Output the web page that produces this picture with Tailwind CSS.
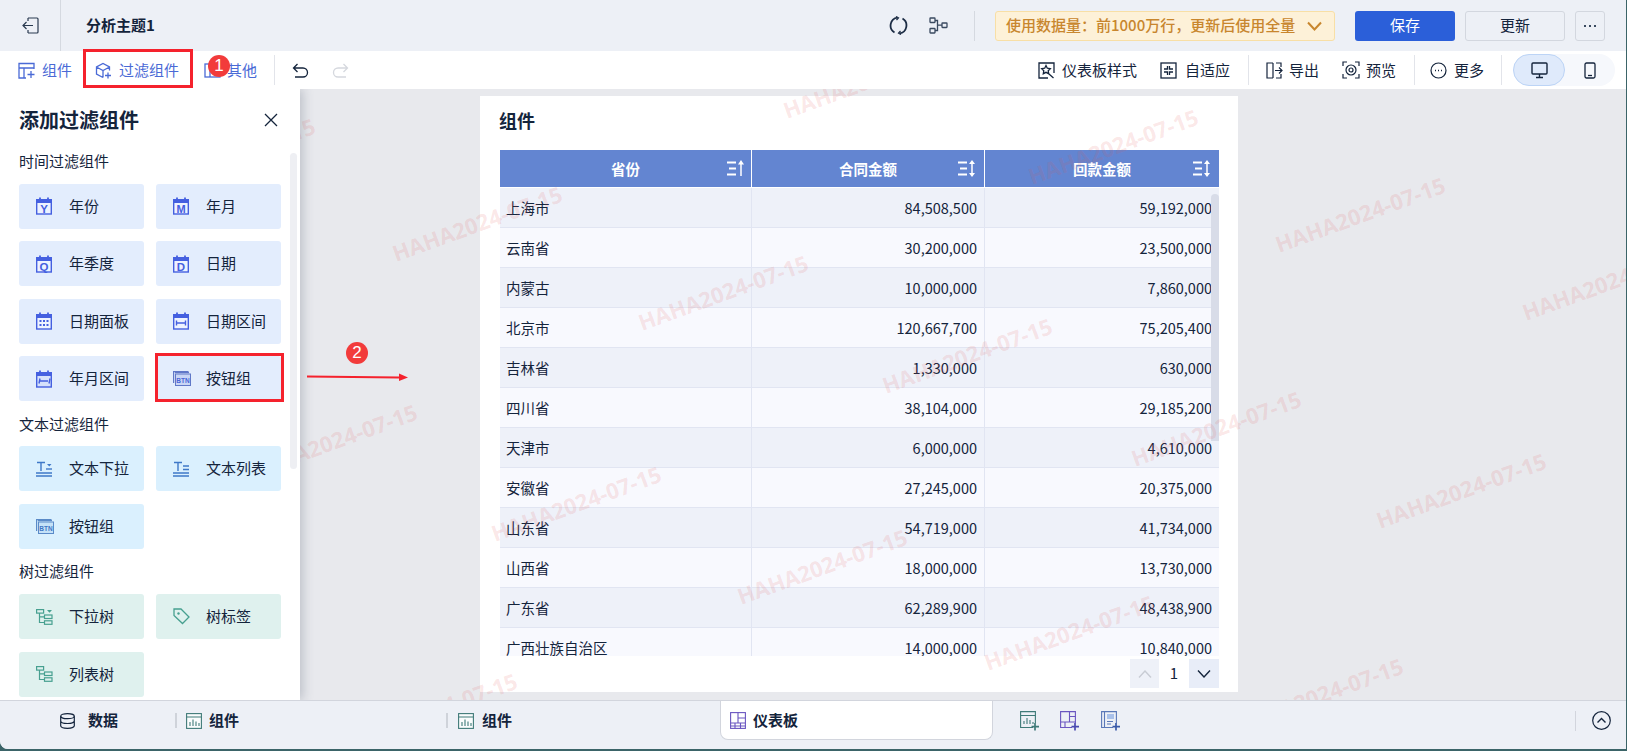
<!DOCTYPE html>
<html lang="zh">
<head>
  <meta charset="UTF-8" />
  <title>分析主题1</title>
  <script src="https://cdn.jsdelivr.net/npm/@tailwindcss/browser@4"></script>
</head>
<body class="bg-[#3b6468]">
<div class="relative w-[1627px] h-[751px] overflow-hidden bg-[#3b6468] font-['Noto_Sans_CJK_SC',sans-serif] text-[15px] text-[#14243c]">
  <div class="w-[1626px] h-[749px] flex flex-col overflow-hidden rounded-bl-lg bg-[#edf0f6]">

    <!-- top bar -->
    <header class="h-[51px] shrink-0 flex items-center pr-[21px]">
      <div class="w-[61px] h-full flex items-center justify-center border-r border-[#d5d9e0]">
        <svg class="w-[17px] h-[17px]" viewBox="0 0 17 17" fill="none" stroke="#2a3a50" stroke-width="1.2"><path d="M6 1h9a1 1 0 0 1 1 1v13a1 1 0 0 1-1 1H6M6 1v3M6 16v-3M11 8.500H1M4.500 5 1 8.500 4.500 12"/></svg>
      </div>
      <h1 class="ml-[25px] font-bold">分析主题1</h1>
      <div class="ml-auto flex items-center">
        <svg class="w-[19px] h-[19px]" viewBox="0 0 19 19" fill="none" stroke="#1c2c44" stroke-width="1.800"><path d="M8.500 1.600a8 8 0 0 0-3 14.800M10.500 17.400a8 8 0 0 0 3-14.800"/><path d="M7 .5 9.500 1.800 7.500 4M12 18.500 9.500 17.200l2-2.200" stroke-width="1.200"/></svg>
        <svg class="ml-[21px] w-[19px] h-[19px]" viewBox="0 0 19 19" fill="none" stroke="#3a4a60" stroke-width="1.300"><rect x="1" y="2" width="5" height="4.500" rx=".5"/><rect x="1" y="12.500" width="5" height="4.500" rx=".5"/><rect x="13" y="7" width="5" height="4.500" rx=".5"/><path d="M6 4.500h2.500v10H6M8.500 9.200H13"/></svg>
        <div class="ml-[26px] mr-[20px] w-px h-[30px] bg-[#d5d9e0]"></div>
        <div class="w-[340px] h-[30px] flex items-center pl-[10px] rounded-[3px] border border-[#f8dfa6] bg-[#fdf1d8] text-[#c8862e] font-medium">
          使用数据量：前1000万行，更新后使用全量
          <svg class="ml-[12px] w-[15px] h-[10px]" viewBox="0 0 15 10" fill="none" stroke="#c8862e" stroke-width="2"><path d="M1 1.500 7.500 8.500 14 1.500"/></svg>
        </div>
        <button class="ml-[20px] w-[100px] h-[30px] rounded-[3px] bg-[#2b5fd9] text-white">保存</button>
        <button class="ml-[10px] w-[100px] h-[30px] rounded-[3px] border border-[#d3d7df]">更新</button>
        <button class="ml-[10px] w-[30px] h-[30px] rounded-[3px] border border-[#d3d7df] flex items-center justify-center gap-[3px]">
          <i class="w-[2px] h-[2px] bg-[#3a4a60]"></i><i class="w-[2px] h-[2px] bg-[#3a4a60]"></i><i class="w-[2px] h-[2px] bg-[#3a4a60]"></i>
        </button>
      </div>
    </header>

    <!-- toolbar -->
    <div class="h-[38px] shrink-0 flex items-center bg-white pl-[18px] pr-[11px]">
      <div class="flex items-center text-[#4a6ad6]">
        <svg class="w-[17px] h-[17px]" viewBox="0 0 17 17" fill="none" stroke="#4a6ad6" stroke-width="1.300"><path d="M16 7V1.500H1V16h7M1 6h15M6 6v10"/><path d="M13 9v7M9.500 12.500h7"/></svg>
        <span class="ml-[7px]">组件</span>
        <svg class="ml-[23px] w-[17px] h-[17px]" viewBox="0 0 17 17" fill="none" stroke="#4a6ad6" stroke-width="1.300"><path d="M8 15.500 1.500 12V5L8 1.500 14.500 5v3.500M1.500 5 8 8.500 14.500 5M8 8.500v7"/><path d="M13 10.500v6M10 13.500h6"/></svg>
        <span class="ml-[7px]">过滤组件</span>
        <svg class="ml-[25px] w-[17px] h-[17px]" viewBox="0 0 17 17" fill="none" stroke="#4a6ad6" stroke-width="1.300"><rect x="1" y="2" width="15" height="13"/><path d="M6 2v13M9 6h5M9 10h5"/></svg>
        <span class="ml-[6px]">其他</span>
      </div>
      <div class="ml-[17px] w-px h-[30px] bg-[#e2e4ea]"></div>
      <svg class="ml-[17px] w-[17px] h-[15px]" viewBox="0 0 17 15" fill="none" stroke="#14243c" stroke-width="1.300"><path d="M5.500 1 1.500 5l4 4M1.500 5H11a4.500 4.500 0 0 1 0 9H3"/></svg>
      <svg class="ml-[23px] w-[17px] h-[15px]" viewBox="0 0 17 15" fill="none" stroke="#d5d8de" stroke-width="1.300"><path d="M11.500 1l4 4-4 4M15.500 5H6a4.500 4.500 0 0 0 0 9h8"/></svg>

      <div class="ml-auto flex items-center">
        <svg class="w-[17px] h-[17px]" viewBox="0 0 17 17" fill="none" stroke="#14243c" stroke-width="1.300"><path d="M10 16H1V1h15v10"/><path d="m8 3.500 1.300 2.700 3 .4-2.100 2.100.5 3-2.700-1.400-2.700 1.400.5-3-2.100-2.100 3-.4zM11 12l4.500 4"/></svg>
        <span class="ml-[7px]">仪表板样式</span>
        <svg class="ml-[23px] w-[17px] h-[17px]" viewBox="0 0 17 17" fill="none" stroke="#14243c" stroke-width="1.300"><rect x="1" y="1" width="15" height="15"/><path d="M4 7h3.500V4M13 7H9.500V4M4 10h3.500v3M13 10H9.500v3"/></svg>
        <span class="ml-[8px]">自适应</span>
        <div class="ml-[18px] w-px h-[30px] bg-[#e2e4ea]"></div>
        <svg class="ml-[17px] w-[17px] h-[17px]" viewBox="0 0 17 17" fill="none" stroke="#14243c" stroke-width="1.200"><path d="M7 1H1v15h6M7 1v15M10 1h5v4M10 16h5v-4M9 8.500h7M13 5.500l3 3-3 3"/></svg>
        <span class="ml-[6px]">导出</span>
        <svg class="ml-[23px] w-[18px] h-[18px]" viewBox="0 0 18 18" fill="none" stroke="#14243c" stroke-width="1.200"><path d="M1 5V1h4M13 1h4v4M17 13v4h-4M5 17H1v-4"/><circle cx="9" cy="9" r="5"/><circle cx="9" cy="9" r="2"/></svg>
        <span class="ml-[6px]">预览</span>
        <div class="ml-[18px] w-px h-[30px] bg-[#e2e4ea]"></div>
        <svg class="ml-[15px] w-[17px] h-[17px]" viewBox="0 0 17 17" fill="none" stroke="#14243c" stroke-width="1.200"><circle cx="8.500" cy="8.500" r="7.500"/><path d="M5 8.500h1M8 8.500h1M11 8.500h1" stroke-width="1.500"/></svg>
        <span class="ml-[7px]">更多</span>
        <div class="ml-[17px] w-px h-[30px] bg-[#e2e4ea]"></div>
        <div class="ml-[11px] w-[102px] h-[32px] flex items-center rounded-full bg-[#f6f8fc]">
          <div class="w-[52px] h-[32px] flex items-center justify-center rounded-full border border-[#bcd4f6] bg-[#dfeafb]">
            <svg class="w-[17px] h-[17px]" viewBox="0 0 17 17" fill="none" stroke="#14243c" stroke-width="1.400"><rect x="1" y="1" width="15" height="11" rx="1"/><path d="M8.500 12v3M5 15.500h7"/></svg>
          </div>
          <div class="w-[50px] flex justify-center">
            <svg class="w-[12px] h-[17px]" viewBox="0 0 12 17" fill="none" stroke="#14243c" stroke-width="1.300"><rect x="1" y="1" width="10" height="15" rx="1.500"/><path d="M4 13.500h4"/></svg>
          </div>
        </div>
      </div>
    </div>

    <!-- main -->
    <main class="relative h-[611px] shrink-0 flex bg-[#e8e9ed] overflow-hidden">
      <aside class="relative z-20 w-[300px] shrink-0 h-full bg-white shadow-[3px_0_10px_rgba(60,70,90,0.25)] overflow-hidden pl-[19px] pt-[17px]">
        <div class="flex items-center h-[28px] w-[259px] justify-between">
          <h2 class="text-[20px] font-bold">添加过滤组件</h2>
          <svg class="w-[14px] h-[14px]" viewBox="0 0 14 14" fill="none" stroke="#14243c" stroke-width="1.300"><path d="M1 1l12 12M13 1 1 13"/></svg>
        </div>
        <div class="absolute left-[290px] top-[64px] w-[7px] h-[316px] rounded-full bg-[#eeeff3]"></div>

        <h3 class="mt-[16.500px] h-[20px] leading-[20px]">时间过滤组件</h3>
        <div class="mt-[13px] grid grid-cols-[125px_125px] gap-x-[12px] gap-y-[12.500px] auto-rows-[45px]">
          <div class="flex items-center rounded-[3px] bg-[#e3edfd] pl-[17px]">
            <svg class="w-[16px] h-[18px]" viewBox="0 0 16 18" fill="none" stroke="#4560e0" stroke-width="1.400"><rect x=".7" y="3" width="14.600" height="14" fill="#eef3ff"/><path d="M.7 3h14.600v2H.7zM4 .5V3M12 .5V3" stroke-width="1.800"/><text x="8" y="15.500" text-anchor="middle" font-size="11.500" font-weight="700" fill="#4560e0" stroke="none" font-family="Liberation Sans">Y</text></svg>
            <span class="ml-[17px]">年份</span>
          </div>
          <div class="flex items-center rounded-[3px] bg-[#e3edfd] pl-[17px]">
            <svg class="w-[16px] h-[18px]" viewBox="0 0 16 18" fill="none" stroke="#4560e0" stroke-width="1.400"><rect x=".7" y="3" width="14.600" height="14" fill="#eef3ff"/><path d="M.7 3h14.600v2H.7zM4 .5V3M12 .5V3" stroke-width="1.800"/><text x="8" y="15.500" text-anchor="middle" font-size="11" font-weight="700" fill="#4560e0" stroke="none" font-family="Liberation Sans">M</text></svg>
            <span class="ml-[17px]">年月</span>
          </div>
          <div class="flex items-center rounded-[3px] bg-[#e3edfd] pl-[17px]">
            <svg class="w-[16px] h-[18px]" viewBox="0 0 16 18" fill="none" stroke="#4560e0" stroke-width="1.400"><rect x=".7" y="3" width="14.600" height="14" fill="#eef3ff"/><path d="M.7 3h14.600v2H.7zM4 .5V3M12 .5V3" stroke-width="1.800"/><text x="8" y="15.500" text-anchor="middle" font-size="11.500" font-weight="700" fill="#4560e0" stroke="none" font-family="Liberation Sans">Q</text></svg>
            <span class="ml-[17px]">年季度</span>
          </div>
          <div class="flex items-center rounded-[3px] bg-[#e3edfd] pl-[17px]">
            <svg class="w-[16px] h-[18px]" viewBox="0 0 16 18" fill="none" stroke="#4560e0" stroke-width="1.400"><rect x=".7" y="3" width="14.600" height="14" fill="#eef3ff"/><path d="M.7 3h14.600v2H.7zM4 .5V3M12 .5V3" stroke-width="1.800"/><text x="8" y="15.500" text-anchor="middle" font-size="11.500" font-weight="700" fill="#4560e0" stroke="none" font-family="Liberation Sans">D</text></svg>
            <span class="ml-[17px]">日期</span>
          </div>
          <div class="flex items-center rounded-[3px] bg-[#e3edfd] pl-[17px]">
            <svg class="w-[16px] h-[18px]" viewBox="0 0 16 18" fill="none" stroke="#4560e0" stroke-width="1.400"><rect x=".7" y="3" width="14.600" height="14" fill="#eef3ff"/><path d="M.7 3h14.600v2H.7zM4 .5V3M12 .5V3" stroke-width="1.800"/><path d="M3.500 9h2M7 9h2M10.500 9h2M3.500 13h2M7 13h2M10.500 13h2" stroke-width="2"/></svg>
            <span class="ml-[17px]">日期面板</span>
          </div>
          <div class="flex items-center rounded-[3px] bg-[#e3edfd] pl-[17px]">
            <svg class="w-[16px] h-[18px]" viewBox="0 0 16 18" fill="none" stroke="#4560e0" stroke-width="1.400"><rect x=".7" y="3" width="14.600" height="14" fill="#eef3ff"/><path d="M.7 3h14.600v2H.7zM4 .5V3M12 .5V3" stroke-width="1.800"/><path d="M3.500 8.500v5M12.500 8.500v5M3.500 11h9"/></svg>
            <span class="ml-[17px]">日期区间</span>
          </div>
          <div class="flex items-center rounded-[3px] bg-[#e3edfd] pl-[17px]">
            <svg class="w-[16px] h-[18px]" viewBox="0 0 16 18" fill="none" stroke="#4560e0" stroke-width="1.400"><rect x=".7" y="3" width="14.600" height="14" fill="#d6e1fb"/><path d="M.7 3h14.600v2H.7zM4 .5V3M12 .5V3" stroke-width="1.800"/><path d="M3 13.500l1-5M13 13.500l1-5M4 11h8"/></svg>
            <span class="ml-[17px]">年月区间</span>
          </div>
          <div class="flex items-center rounded-[3px] bg-[#e3edfd] pl-[17px]">
            <svg class="w-[18px] h-[15px]" viewBox="0 0 18 15" fill="none" stroke="#6078c8" stroke-width="1"><path d="M.6 12V.6h14.800" stroke-width="1.200"/><path d="M2 1.500h14" stroke-width="1.400"/><rect x="2.500" y="3" width="15" height="11.500" fill="#c9d6f5"/><text x="10" y="12" text-anchor="middle" font-size="6.500" font-weight="700" fill="#4a66d8" stroke="none" font-family="Liberation Sans">BTN</text></svg>
            <span class="ml-[15px]">按钮组</span>
          </div>
        </div>

        <h3 class="mt-[12.500px] h-[20px] leading-[20px]">文本过滤组件</h3>
        <div class="mt-[12.500px] grid grid-cols-[125px_125px] gap-x-[12px] gap-y-[12.500px] auto-rows-[45px]">
          <div class="flex items-center rounded-[3px] bg-[#daf0fe] pl-[17px]">
            <svg class="w-[16px] h-[16px]" viewBox="0 0 16 16" fill="none" stroke="#3f78c8" stroke-width="1.400"><path d="M1 1.500h8M5 1.500V10M0 12h16M0 15h16"/><path d="M11 3h4.500l-2.250 2.500z" fill="#3f78c8" stroke="none"/><path d="M10 8h6" /></svg>
            <span class="ml-[17px]">文本下拉</span>
          </div>
          <div class="flex items-center rounded-[3px] bg-[#daf0fe] pl-[17px]">
            <svg class="w-[16px] h-[16px]" viewBox="0 0 16 16" fill="none" stroke="#3f78c8" stroke-width="1.400"><path d="M1 1.500h8M5 1.500V10M0 12h16M0 15h16M10 5h6M10 8.500h6"/></svg>
            <span class="ml-[17px]">文本列表</span>
          </div>
          <div class="flex items-center rounded-[3px] bg-[#daf0fe] pl-[17px]">
            <svg class="w-[18px] h-[15px]" viewBox="0 0 18 15" fill="none" stroke="#5a8ac8" stroke-width="1"><path d="M.6 12V.6h14.800" stroke-width="1.200"/><path d="M2 1.500h14" stroke-width="1.400"/><rect x="2.500" y="3" width="15" height="11.500" fill="#c5e2f8"/><text x="10" y="12" text-anchor="middle" font-size="6.500" font-weight="700" fill="#3f76c4" stroke="none" font-family="Liberation Sans">BTN</text></svg>
            <span class="ml-[15px]">按钮组</span>
          </div>
        </div>

        <h3 class="mt-[12.500px] h-[20px] leading-[20px]">树过滤组件</h3>
        <div class="mt-[13px] grid grid-cols-[125px_125px] gap-x-[12px] gap-y-[12.500px] auto-rows-[45px]">
          <div class="flex items-center rounded-[3px] bg-[#dff1ee] pl-[17px]">
            <svg class="w-[17px] h-[16px]" viewBox="0 0 17 16" fill="none" stroke="#47a090" stroke-width="1.200"><rect x=".6" y=".6" width="7" height="3.500"/><rect x="8.500" y="6" width="7.500" height="3.500"/><rect x="8.500" y="11.800" width="7.500" height="3.500"/><path d="M3.500 4v9.500h5M3.500 7.800h5"/><path d="M11 1h5l-2.500 2.800z" fill="#47a090" stroke="none"/></svg>
            <span class="ml-[16px]">下拉树</span>
          </div>
          <div class="flex items-center rounded-[3px] bg-[#dff1ee] pl-[17px]">
            <svg class="w-[17px] h-[17px]" viewBox="0 0 17 17" fill="none" stroke="#47a090" stroke-width="1.300"><path d="M1 1h7l8 8-6.500 6.500-8.500-8z"/><circle cx="5.500" cy="5.500" r="1.200" fill="#47a090" stroke="none"/></svg>
            <span class="ml-[16px]">树标签</span>
          </div>
          <div class="flex items-center rounded-[3px] bg-[#dff1ee] pl-[17px]">
            <svg class="w-[17px] h-[16px]" viewBox="0 0 17 16" fill="none" stroke="#47a090" stroke-width="1.200"><rect x=".6" y=".6" width="7" height="3.500"/><rect x="8.500" y="6" width="7.500" height="3.500"/><rect x="8.500" y="11.800" width="7.500" height="3.500"/><path d="M3.500 4v9.500h5M3.500 7.800h5"/></svg>
            <span class="ml-[16px]">列表树</span>
          </div>
        </div>
      </aside>

      <!-- dashboard canvas -->
      <section class="ml-[180px] mt-[7px] w-[758px] h-[596px] shrink-0 bg-white pl-[20px] pr-[19px] pt-[10px] flex flex-col">
        <h2 class="-ml-px h-[28px] leading-[28px] text-[18px] font-bold">组件</h2>
        <div class="relative mt-[16px] w-[719px] h-[506px] overflow-hidden text-[14.500px]">
          <div class="grid grid-cols-[251px_233px_235px] h-[37px] bg-[#6385d1] text-white font-bold">
            <div class="relative flex items-center justify-center">省份
              <svg class="absolute right-[6px] top-[10px] w-[18px] h-[17px]" viewBox="0 0 18 17" fill="none" stroke="white"><path d="M0 2.500h9M2 8.500h7M0 14.500h9" stroke-width="2"/><path d="M14 16V3" stroke-width="1.500"/><path d="M14 0l3 4.500h-6z" fill="white" stroke="none"/></svg>
            </div>
            <div class="relative flex items-center justify-center border-l border-white">合同金额
              <svg class="absolute right-[8px] top-[10px] w-[18px] h-[17px]" viewBox="0 0 18 17" fill="none" stroke="white"><path d="M0 2.500h9M2 8.500h7M0 14.500h9" stroke-width="2"/><path d="M14 3v11" stroke-width="1.500"/><path d="M14 0l3 4h-6zM14 17l3-4h-6z" fill="white" stroke="none"/></svg>
            </div>
            <div class="relative flex items-center justify-center border-l border-white">回款金额
              <svg class="absolute right-[8px] top-[10px] w-[18px] h-[17px]" viewBox="0 0 18 17" fill="none" stroke="white"><path d="M0 2.500h9M2 8.500h7M0 14.500h9" stroke-width="2"/><path d="M14 3v11" stroke-width="1.500"/><path d="M14 0l3 4h-6zM14 17l3-4h-6z" fill="white" stroke="none"/></svg>
            </div>
          </div>
          <div class="mt-px divide-y divide-[#e1e5f2]">
            <div class="grid grid-cols-[251px_233px_235px] h-[40px] items-center bg-[#eef1f9]"><div class="pl-[6px]">上海市</div><div class="h-full flex items-center justify-end pr-[7px] border-l border-[#e1e5f2]">84,508,500</div><div class="h-full flex items-center justify-end pr-[7px] border-l border-[#e1e5f2]">59,192,000</div></div>
            <div class="grid grid-cols-[251px_233px_235px] h-[40px] items-center bg-[#f8f9fe]"><div class="pl-[6px]">云南省</div><div class="h-full flex items-center justify-end pr-[7px] border-l border-[#e1e5f2]">30,200,000</div><div class="h-full flex items-center justify-end pr-[7px] border-l border-[#e1e5f2]">23,500,000</div></div>
            <div class="grid grid-cols-[251px_233px_235px] h-[40px] items-center bg-[#eef1f9]"><div class="pl-[6px]">内蒙古</div><div class="h-full flex items-center justify-end pr-[7px] border-l border-[#e1e5f2]">10,000,000</div><div class="h-full flex items-center justify-end pr-[7px] border-l border-[#e1e5f2]">7,860,000</div></div>
            <div class="grid grid-cols-[251px_233px_235px] h-[40px] items-center bg-[#f8f9fe]"><div class="pl-[6px]">北京市</div><div class="h-full flex items-center justify-end pr-[7px] border-l border-[#e1e5f2]">120,667,700</div><div class="h-full flex items-center justify-end pr-[7px] border-l border-[#e1e5f2]">75,205,400</div></div>
            <div class="grid grid-cols-[251px_233px_235px] h-[40px] items-center bg-[#eef1f9]"><div class="pl-[6px]">吉林省</div><div class="h-full flex items-center justify-end pr-[7px] border-l border-[#e1e5f2]">1,330,000</div><div class="h-full flex items-center justify-end pr-[7px] border-l border-[#e1e5f2]">630,000</div></div>
            <div class="grid grid-cols-[251px_233px_235px] h-[40px] items-center bg-[#f8f9fe]"><div class="pl-[6px]">四川省</div><div class="h-full flex items-center justify-end pr-[7px] border-l border-[#e1e5f2]">38,104,000</div><div class="h-full flex items-center justify-end pr-[7px] border-l border-[#e1e5f2]">29,185,200</div></div>
            <div class="grid grid-cols-[251px_233px_235px] h-[40px] items-center bg-[#eef1f9]"><div class="pl-[6px]">天津市</div><div class="h-full flex items-center justify-end pr-[7px] border-l border-[#e1e5f2]">6,000,000</div><div class="h-full flex items-center justify-end pr-[7px] border-l border-[#e1e5f2]">4,610,000</div></div>
            <div class="grid grid-cols-[251px_233px_235px] h-[40px] items-center bg-[#f8f9fe]"><div class="pl-[6px]">安徽省</div><div class="h-full flex items-center justify-end pr-[7px] border-l border-[#e1e5f2]">27,245,000</div><div class="h-full flex items-center justify-end pr-[7px] border-l border-[#e1e5f2]">20,375,000</div></div>
            <div class="grid grid-cols-[251px_233px_235px] h-[40px] items-center bg-[#eef1f9]"><div class="pl-[6px]">山东省</div><div class="h-full flex items-center justify-end pr-[7px] border-l border-[#e1e5f2]">54,719,000</div><div class="h-full flex items-center justify-end pr-[7px] border-l border-[#e1e5f2]">41,734,000</div></div>
            <div class="grid grid-cols-[251px_233px_235px] h-[40px] items-center bg-[#f8f9fe]"><div class="pl-[6px]">山西省</div><div class="h-full flex items-center justify-end pr-[7px] border-l border-[#e1e5f2]">18,000,000</div><div class="h-full flex items-center justify-end pr-[7px] border-l border-[#e1e5f2]">13,730,000</div></div>
            <div class="grid grid-cols-[251px_233px_235px] h-[40px] items-center bg-[#eef1f9]"><div class="pl-[6px]">广东省</div><div class="h-full flex items-center justify-end pr-[7px] border-l border-[#e1e5f2]">62,289,900</div><div class="h-full flex items-center justify-end pr-[7px] border-l border-[#e1e5f2]">48,438,900</div></div>
            <div class="grid grid-cols-[251px_233px_235px] h-[40px] items-center bg-[#f8f9fe]"><div class="pl-[6px]">广西壮族自治区</div><div class="h-full flex items-center justify-end pr-[7px] border-l border-[#e1e5f2]">14,000,000</div><div class="h-full flex items-center justify-end pr-[7px] border-l border-[#e1e5f2]">10,840,000</div></div>
          </div>
          <div class="absolute right-0 top-[44px] w-[8px] h-[247px] rounded-t-sm bg-[#d8dce8]"></div>
        </div>
        <div class="mt-[3px] w-[719px] flex items-center justify-end">
          <div class="w-[29px] h-[29px] flex items-center justify-center bg-[#eef1f8]"><svg class="w-[14px] h-[8px]" viewBox="0 0 14 8" fill="none" stroke="#c8ccd4" stroke-width="1.400"><path d="M1 7.500 7 1l6 6.500"/></svg></div>
          <span class="w-[30px] text-center">1</span>
          <div class="w-[30px] h-[29px] flex items-center justify-center bg-[#e8edf8]"><svg class="w-[14px] h-[8px]" viewBox="0 0 14 8" fill="none" stroke="#14243c" stroke-width="1.400"><path d="M1 .5 7 7l6-6.500"/></svg></div>
        </div>
      </section>

      <!-- watermark -->
      <div class="absolute inset-0 z-10 pointer-events-none font-['Open_Sans',sans-serif] font-bold text-[22px] leading-[24px] text-[#e05555]/15">
        <span class="absolute w-[230px] text-center -rotate-[20deg] left-[115px] top-[54px]">HAHA2024-07-15</span>
        <span class="absolute w-[230px] text-center -rotate-[20deg] left-[753px] top-[-21px]">HAHA2024-07-15</span>
        <span class="absolute w-[230px] text-center -rotate-[20deg] left-[998px] top-[45px]">HAHA2024-07-15</span>
        <span class="absolute w-[230px] text-center -rotate-[20deg] left-[362px] top-[122px]">HAHA2024-07-15</span>
        <span class="absolute w-[230px] text-center -rotate-[20deg] left-[608px] top-[191px]">HAHA2024-07-15</span>
        <span class="absolute w-[230px] text-center -rotate-[20deg] left-[1245px] top-[113px]">HAHA2024-07-15</span>
        <span class="absolute w-[230px] text-center -rotate-[20deg] left-[1492px] top-[181px]">HAHA2024-07-15</span>
        <span class="absolute w-[230px] text-center -rotate-[20deg] left-[217px] top-[340px]">HAHA2024-07-15</span>
        <span class="absolute w-[230px] text-center -rotate-[20deg] left-[461px] top-[402px]">HAHA2024-07-15</span>
        <span class="absolute w-[230px] text-center -rotate-[20deg] left-[852px] top-[254px]">HAHA2024-07-15</span>
        <span class="absolute w-[230px] text-center -rotate-[20deg] left-[1101px] top-[327px]">HAHA2024-07-15</span>
        <span class="absolute w-[230px] text-center -rotate-[20deg] left-[1346px] top-[389px]">HAHA2024-07-15</span>
        <span class="absolute w-[230px] text-center -rotate-[20deg] left-[707px] top-[465px]">HAHA2024-07-15</span>
        <span class="absolute w-[230px] text-center -rotate-[20deg] left-[954px] top-[531px]">HAHA2024-07-15</span>
        <span class="absolute w-[230px] text-center -rotate-[20deg] left-[317px] top-[609px]">HAHA2024-07-15</span>
        <span class="absolute w-[230px] text-center -rotate-[20deg] left-[1203px] top-[594px]">HAHA2024-07-15</span>
      </div>
    </main>

    <!-- bottom bar -->
    <footer class="relative z-30 flex-1 flex items-center border-t border-[#d2d5dd] bg-[#edf0f6] font-bold text-[15px] pb-[10px]">
      <svg class="ml-[60px] w-[15px] h-[16px]" viewBox="0 0 15 16" fill="none" stroke="#14243c" stroke-width="1.200"><ellipse cx="7.500" cy="3.200" rx="6.800" ry="2.500"/><path d="M.7 3.200v9.600c0 1.400 3 2.500 6.800 2.500s6.800-1.100 6.800-2.500V3.200M.7 8c0 1.400 3 2.500 6.800 2.500S14.300 9.400 14.300 8"/></svg>
      <span class="ml-[13px]">数据</span>
      <div class="ml-[57px] w-[2px] h-[15px] bg-[#cfd3da]"></div>
      <svg class="ml-[9px] w-[16px] h-[16px]" viewBox="0 0 16 16" fill="none" stroke="#3f7a78" stroke-width="1.100"><rect x=".6" y=".6" width="14.800" height="14.800" fill="#fafcfc"/><path d="M.6 4h14.800M4 13V9M7 13V6.500M10 13v-4.500M13 13v-3"/></svg>
      <span class="ml-[7px]">组件</span>
      <div class="ml-[207px] w-[2px] h-[15px] bg-[#cfd3da]"></div>
      <svg class="ml-[10px] w-[16px] h-[16px]" viewBox="0 0 16 16" fill="none" stroke="#3f7a78" stroke-width="1.100"><rect x=".6" y=".6" width="14.800" height="14.800" fill="#fafcfc"/><path d="M.6 4h14.800M4 13V9M7 13V6.500M10 13v-4.500M13 13v-3"/></svg>
      <span class="ml-[8px]">组件</span>
      <div class="self-start ml-[208px] w-[273px] h-[39px] flex items-center rounded-b-lg border border-t-0 border-[#d2d5dd] bg-white pl-[9px]">
        <svg class="w-[16px] h-[17px]" viewBox="0 0 16 17" fill="none" stroke="#6a56c0" stroke-width="1.100"><rect x=".6" y=".6" width="14.800" height="15.800"/><path d="M8 .6V11M.6 11h14.800M.6 14h14.800M5 11v5.400M10.500 11v5.400M8 6h7.400"/></svg>
        <span class="ml-[7px]">仪表板</span>
      </div>
      <svg class="ml-[27px] w-[19px] h-[20px]" viewBox="0 0 19 20" fill="none" stroke="#3f7a78" stroke-width="1.100"><path d="M13 16.500H.6V.6h14.800V12"/><path d="M.6 4.500h14.800M4 13V10M7 13V7M10 13V9M13 13v-2"/><path d="M15 12v7.500M11.500 15.700h7.500" stroke-width="1.700"/></svg>
      <svg class="ml-[21px] w-[19px] h-[20px]" viewBox="0 0 19 20" fill="none" stroke="#6a56c0" stroke-width="1.100"><path d="M12 16.500H.6V.6h14.800V12"/><path d="M9.500.6v10M.6 11h14.800M5 11v5.500M9.500 5.500h5.900"/><path d="M15 12v7.500M11.500 15.700h7.500" stroke="#4a4ab0" stroke-width="1.700"/></svg>
      <svg class="ml-[22px] w-[19px] h-[20px]" viewBox="0 0 19 20" fill="none" stroke="#5a78b8" stroke-width="1.100"><path d="M12 16.500H.6V.6h14.800V12M3.500.6v15.900"/><rect x="6" y="3" width="7" height="5" fill="#a9c1ea" stroke="none"/><path d="M6 10.500h6M6 13h4"/><path d="M15 12v7.500M11.500 15.700h7.500" stroke="#3a5aa8" stroke-width="1.700"/></svg>
      <div class="ml-auto w-px h-[20px] bg-[#d2d5dd]"></div>
      <svg class="ml-[16px] mr-[15px] w-[19px] h-[19px]" viewBox="0 0 19 19" fill="none" stroke="#14243c" stroke-width="1.200"><circle cx="9.500" cy="9.500" r="8.800"/><path d="M5.500 11.500 9.500 7.500l4 4" stroke-width="1.400"/></svg>
    </footer>
  </div>

  <!-- annotations drawn over the screenshot -->
  <div class="absolute left-[83px] top-[49px] w-[110px] h-[39px] border-[3px] border-[#f5222d] z-40"></div>
  <div class="absolute left-[208px] top-[55px] w-[22px] h-[22px] rounded-full bg-[#f23b3b] text-white text-[17px] font-['Liberation_Sans',sans-serif] flex items-center justify-center z-40">1</div>
  <div class="absolute left-[155px] top-[353px] w-[129px] h-[49px] border-[3px] border-[#f5222d] z-40"></div>
  <div class="absolute left-[346px] top-[342px] w-[22px] h-[22px] rounded-full bg-[#f23b3b] text-white text-[17px] font-['Liberation_Sans',sans-serif] flex items-center justify-center z-40">2</div>
  <svg class="absolute left-[307px] top-[371px] w-[101px] h-[12px] z-40" viewBox="0 0 101 12"><path d="M0 5.500 92 6.500" stroke="#f5222d" stroke-width="2"/><path d="M92 2.500 101 6.500 92 10z" fill="#f5222d"/></svg>
</div>
</body>
</html>
